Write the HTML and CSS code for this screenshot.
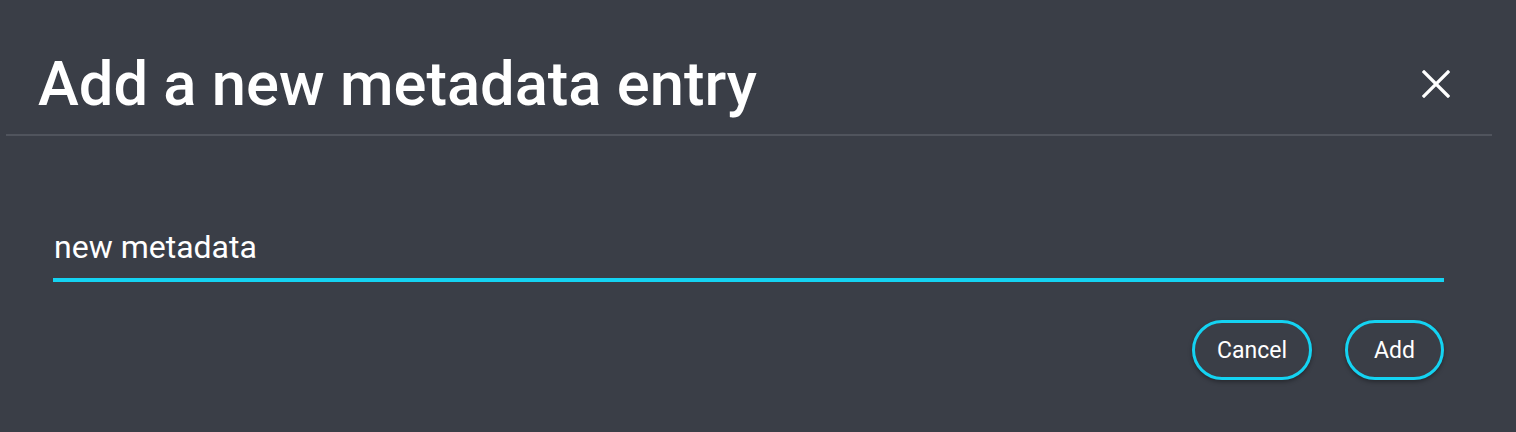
FILE: index.html
```html
<!DOCTYPE html>
<html lang="en">
<head>
  <meta charset="UTF-8">
  <title>Add a new metadata entry</title>
  <link rel="stylesheet" href="styles.css">
</head>
<body>

<div class="dialog">
  <div class="dialog-header">
    <h1 class="dialog-title">Add a new metadata entry</h1>
    <button class="close-btn" aria-label="Close">
      <svg width="28" height="28" viewBox="0 0 28 28">
        <path d="M2 2 L26 26 M26 2 L2 26" stroke="#fff" stroke-width="3.2" stroke-linecap="square"/>
      </svg>
    </button>
  </div>

  <div class="dialog-body">
    <input class="text-field" type="text" value="new metadata">
    <div class="actions">
      <button class="pill-btn">Cancel</button>
      <button class="pill-btn">Add</button>
    </div>
  </div>
</div>

</body>
</html>
```

FILE: styles.css
```css
body { margin: 0; background: #3a3e47; font-family: Roboto, "Noto Sans", sans-serif; color: #fff; }
.dialog { height: 432px; }
.dialog-header { display: flex; align-items: center; justify-content: space-between; margin: 0 24px 0 6px; padding: 48px 42px 14px 32px; border-bottom: 2px solid #50545d; }
.dialog-title { margin: 0; font-size: 61.5px; font-weight: 500; line-height: 72px; letter-spacing: 0; }
.close-btn { background: none; border: none; padding: 0; width: 28px; height: 28px; cursor: pointer; display: flex; }
.dialog-body { padding: 93px 72px 0 53px; }
.text-field { display: block; width: 100%; box-sizing: border-box; background: transparent; border: none; border-bottom: 4px solid #14d3f2; color: #fff; font-family: inherit; font-size: 32px; line-height: 37px; padding: 0 2px 12px 1px; outline: none; }
.actions { display: flex; justify-content: flex-end; gap: 33px; margin-top: 38px; }
.pill-btn { background: #3a3e47; color: #fff; border: 3px solid #14d3f2; border-radius: 30px; height: 60px; min-width: 99px; padding: 0 22px; font-family: inherit; font-size: 23px; box-shadow: 0 2px 4px rgba(0,0,0,0.35); cursor: pointer; }
```
